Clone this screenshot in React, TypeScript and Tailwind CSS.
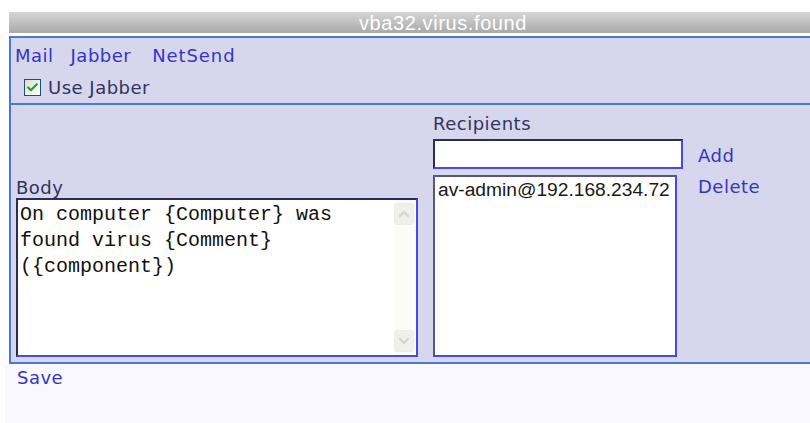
import { Check, ChevronDown, ChevronUp } from 'lucide-react'

const tabs = [
  { label: 'Mail', cls: '' },
  { label: 'Jabber', cls: 'ml-[17px]' },
  { label: 'NetSend', cls: 'ml-[21px] tracking-[0.9px]' },
]
const recipients = ['av-admin@192.168.234.72']
const bodyLines = ['On computer {Computer} was', 'found virus {Comment}', '({component})']

const ui = { fontFamily: '"DejaVu Sans", Verdana, sans-serif' }

function Checkbox() {
  return (
    <span className="flex h-[17px] w-[17px] items-center justify-center border border-[#1c4e80] bg-gradient-to-br from-[#dcdcd6] to-white">
      <Check size={13} strokeWidth={4} className="text-[#21a121]" />
    </span>
  )
}

// scroll track drawn at the right of the body field
function ScrollTrack() {
  return (
    <div className="flex w-[22px] flex-col justify-between bg-[#fbfbf8] py-[3px] pr-[2px]">
      <div className="flex h-[22px] w-[20px] items-center justify-center rounded-[3px] border border-[#ececec] bg-[#f0f0ea]">
        <ChevronUp size={16} strokeWidth={3} className="text-[#d4d4ce]" />
      </div>
      <div className="flex h-[22px] w-[20px] items-center justify-center rounded-[3px] border border-[#ececec] bg-[#f0f0ea]">
        <ChevronDown size={16} strokeWidth={3} className="text-[#d4d4ce]" />
      </div>
    </div>
  )
}

export default function App() {
  return (
    <div className="h-[423px] w-[810px] overflow-hidden bg-white pt-[12px] text-[18px] tracking-[0.5px]" style={ui}>
      <div className="ml-[9px] w-[868px]">
        {/* title */}
        <div className="flex h-[21px] items-center justify-center bg-gradient-to-b from-[#d6d6d6] to-[#a9a9a9]">
          <span
            className="text-[20px] leading-none tracking-[0.6px] text-white"
            style={{ fontFamily: '"Liberation Sans", Arial, sans-serif' }}
          >
            vba32.virus.found
          </span>
        </div>

        <div className="mt-[3px] border-y-2 border-x-2 border-[#4a78d8] bg-[#d6d6ed]">
          {/* channel tabs */}
          <div className="flex h-[33px] items-center pl-[4px] pt-[1px] text-[#3535c5]">
            {tabs.map((t) => (
              <span key={t.label} className={t.cls}>
                {t.label}
              </span>
            ))}
          </div>
          <div className="flex h-[32px] items-center gap-[7px] pl-[13px] text-[#33335f]">
            <Checkbox />
            <span>Use Jabber</span>
          </div>
        </div>

        <div className="border-b-2 border-x-2 border-[#4a78d8] bg-[#d6d6ed] pb-[5px] pl-[5px]">
          <div className="flex">
            {/* body */}
            <div className="flex w-[402px] flex-col justify-end">
              <div className="leading-[20px] text-[#33335f]">Body</div>
              <div className="flex h-[159px] border-2 border-b-[#4848f0] border-l-[#2c2c5a] border-r-[#4848f0] border-t-[#2c2c5a] bg-white">
                <div
                  className="flex-1 pl-[2px] pt-[2px] text-[20px] leading-[26px] tracking-normal text-[#111111]"
                  style={{ fontFamily: '"Liberation Mono", "Courier New", monospace' }}
                >
                  {bodyLines.map((l) => (
                    <div key={l}>{l}</div>
                  ))}
                </div>
                <ScrollTrack />
              </div>
            </div>

            {/* recipients */}
            <div className="ml-[15px] flex flex-col">
              <div className="pt-[8px] leading-[22px] text-[#33335f]">Recipients</div>
              <div className="mt-[3px] flex items-center gap-[15px]">
                <div className="h-[30px] w-[250px] border-2 border-b-[#4848f0] border-l-[#2c2c5a] border-r-[#4848f0] border-t-[#2c2c5a] bg-white" />
                <span className="pt-[4px] text-[#3535c5]">Add</span>
              </div>
              <div className="mt-[6px] flex items-start gap-[21px]">
                <div
                  className="h-[182px] w-[244px] border-2 border-b-[#4848f0] border-l-[#555588] border-r-[#4848f0] border-t-[#555588] bg-white px-[3px] pt-[1px] text-[19.2px] leading-[24px] tracking-normal text-[#1a1a1a]"
                  style={{ fontFamily: '"Liberation Sans", Arial, sans-serif' }}
                >
                  {recipients.map((r) => (
                    <div key={r}>{r}</div>
                  ))}
                </div>
                <span className="pt-[1px] leading-[22px] text-[#3535c5]">Delete</span>
              </div>
            </div>
          </div>
        </div>
      </div>

      {/* footer */}
      <div className="ml-[5px] h-[80px] bg-[#f8f8fe] pl-[12px] text-[#3535c5]">Save</div>
    </div>
  )
}
